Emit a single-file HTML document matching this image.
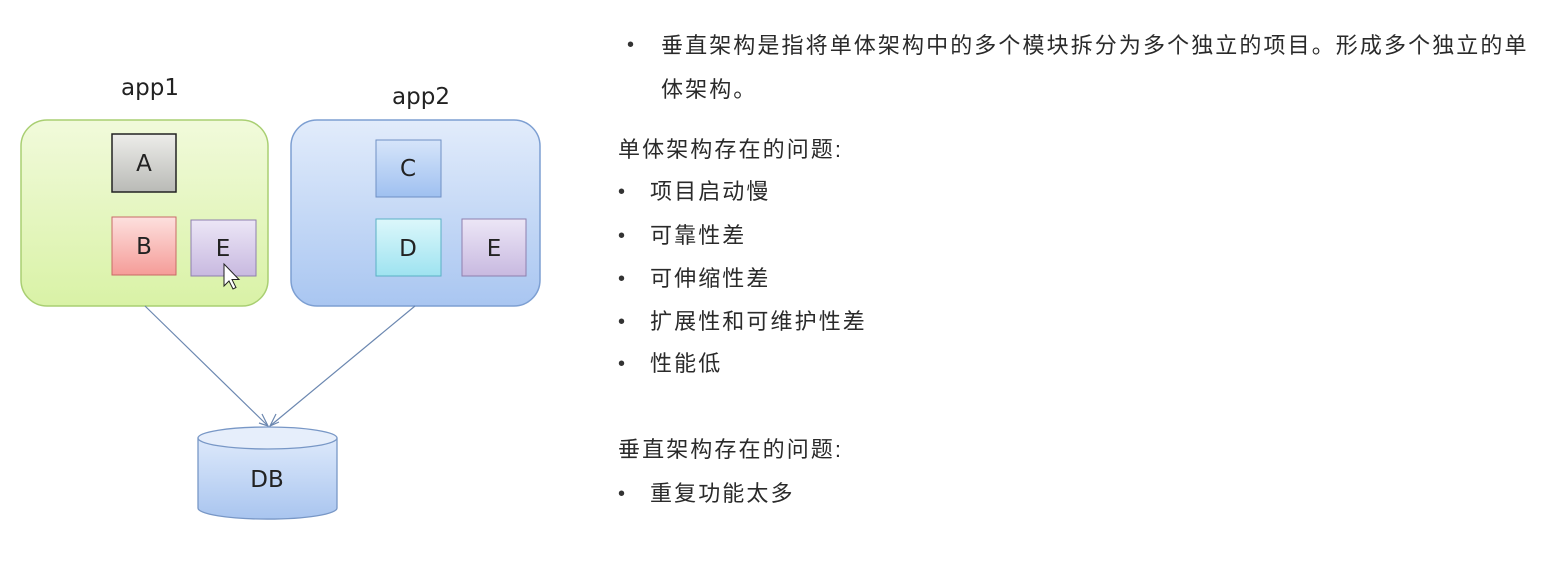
<!DOCTYPE html>
<html><head><meta charset="utf-8"><style>
body{margin:0;width:1567px;height:583px;background:#fff;position:relative;overflow:hidden;font-family:"Liberation Sans","Noto Sans CJK SC",sans-serif;}
.t{position:absolute;font-size:22px;color:#2a2a2a;letter-spacing:2.1px;white-space:nowrap;line-height:1;}
.b{position:absolute;font-size:20px;color:#333;}
</style></head><body>
<svg width="600" height="583" style="position:absolute;left:0;top:0" font-family="DejaVu Sans, sans-serif">
<defs>
<linearGradient id="g1" x1="0" y1="0" x2="0" y2="1"><stop offset="0" stop-color="#f1fadb"/><stop offset="1" stop-color="#d9f2a6"/></linearGradient>
<linearGradient id="g2" x1="0" y1="0" x2="0" y2="1"><stop offset="0" stop-color="#e2ecfb"/><stop offset="1" stop-color="#a9c6f1"/></linearGradient>
<linearGradient id="ga" x1="0" y1="0" x2="0" y2="1"><stop offset="0" stop-color="#ededea"/><stop offset="1" stop-color="#b9bab6"/></linearGradient>
<linearGradient id="gb" x1="0" y1="0" x2="0" y2="1"><stop offset="0" stop-color="#fde0de"/><stop offset="1" stop-color="#f59c98"/></linearGradient>
<linearGradient id="ge" x1="0" y1="0" x2="0" y2="1"><stop offset="0" stop-color="#ece6f6"/><stop offset="1" stop-color="#c8b9e0"/></linearGradient>
<linearGradient id="gc" x1="0" y1="0" x2="0" y2="1"><stop offset="0" stop-color="#d6e5fa"/><stop offset="1" stop-color="#9fc0f0"/></linearGradient>
<linearGradient id="gd" x1="0" y1="0" x2="0" y2="1"><stop offset="0" stop-color="#dcf7fb"/><stop offset="1" stop-color="#9ee3f0"/></linearGradient>
<linearGradient id="gdb" x1="0" y1="0" x2="0" y2="1"><stop offset="0" stop-color="#dde9fb"/><stop offset="1" stop-color="#a9c5ef"/></linearGradient>
</defs>
<text x="150" y="95" font-size="23" text-anchor="middle" fill="#222">app1</text>
<text x="421" y="104" font-size="23" text-anchor="middle" fill="#222">app2</text>
<rect x="21" y="120" width="247" height="186" rx="26" fill="url(#g1)" stroke="#a9cf72" stroke-width="1.5"/>
<rect x="291" y="120" width="249" height="186" rx="26" fill="url(#g2)" stroke="#7d9fd2" stroke-width="1.5"/>
<rect x="112" y="134" width="64" height="58" fill="url(#ga)" stroke="#222" stroke-width="1.5"/>
<rect x="112" y="217" width="64" height="58" fill="url(#gb)" stroke="#c86a66"/>
<rect x="191" y="220" width="65" height="56" fill="url(#ge)" stroke="#8e7fae"/>
<rect x="376" y="140" width="65" height="57" fill="url(#gc)" stroke="#6f90c4"/>
<rect x="376" y="219" width="65" height="57" fill="url(#gd)" stroke="#5ab0c4"/>
<rect x="462" y="219" width="64" height="57" fill="url(#ge)" stroke="#8e7fae"/>
<g stroke="#6b87b0" stroke-width="1.2" fill="none">
<path d="M145 306 L268 426"/><path d="M415 306 L270 426"/>
<path d="M262 414 L268 426 L259 423"/><path d="M276 414 L270 426 L279 422"/>
</g>
<path d="M198 438 v70 a69 11 0 0 0 139 0 v-70" fill="url(#gdb)" stroke="#7897c6" stroke-width="1.3"/>
<ellipse cx="267.5" cy="438" rx="69.5" ry="11" fill="#e6eefb" stroke="#7897c6" stroke-width="1.3"/>
<g font-size="23" text-anchor="middle" fill="#222">
<text x="144" y="171">A</text><text x="144" y="254">B</text><text x="223" y="256">E</text>
<text x="408" y="176">C</text><text x="408" y="256">D</text><text x="494" y="256">E</text>
<text x="267" y="487">DB</text></g>
<path d="M224 264 v22 l5-5 4 8 3-1.5 -4-8 h7 z" fill="#fff" stroke="#222" stroke-width="1"/>
</svg>
<div class="b" style="left:627px;top:34px">•</div>
<div class="t" style="left:661px;top:35px">垂直架构是指将单体架构中的多个模块拆分为多个独立的项目。形成多个独立的单</div>
<div class="t" style="left:661px;top:79px">体架构。</div>
<div class="t" style="left:618px;top:139px">单体架构存在的问题:</div>
<div class="b" style="left:618px;top:181px">•</div><div class="t" style="left:650px;top:181px">项目启动慢</div>
<div class="b" style="left:618px;top:225px">•</div><div class="t" style="left:650px;top:225px">可靠性差</div>
<div class="b" style="left:618px;top:268px">•</div><div class="t" style="left:650px;top:268px">可伸缩性差</div>
<div class="b" style="left:618px;top:311px">•</div><div class="t" style="left:650px;top:311px">扩展性和可维护性差</div>
<div class="b" style="left:618px;top:353px">•</div><div class="t" style="left:650px;top:353px">性能低</div>
<div class="t" style="left:618px;top:439px">垂直架构存在的问题:</div>
<div class="b" style="left:618px;top:483px">•</div><div class="t" style="left:650px;top:483px">重复功能太多</div>
</body></html>
